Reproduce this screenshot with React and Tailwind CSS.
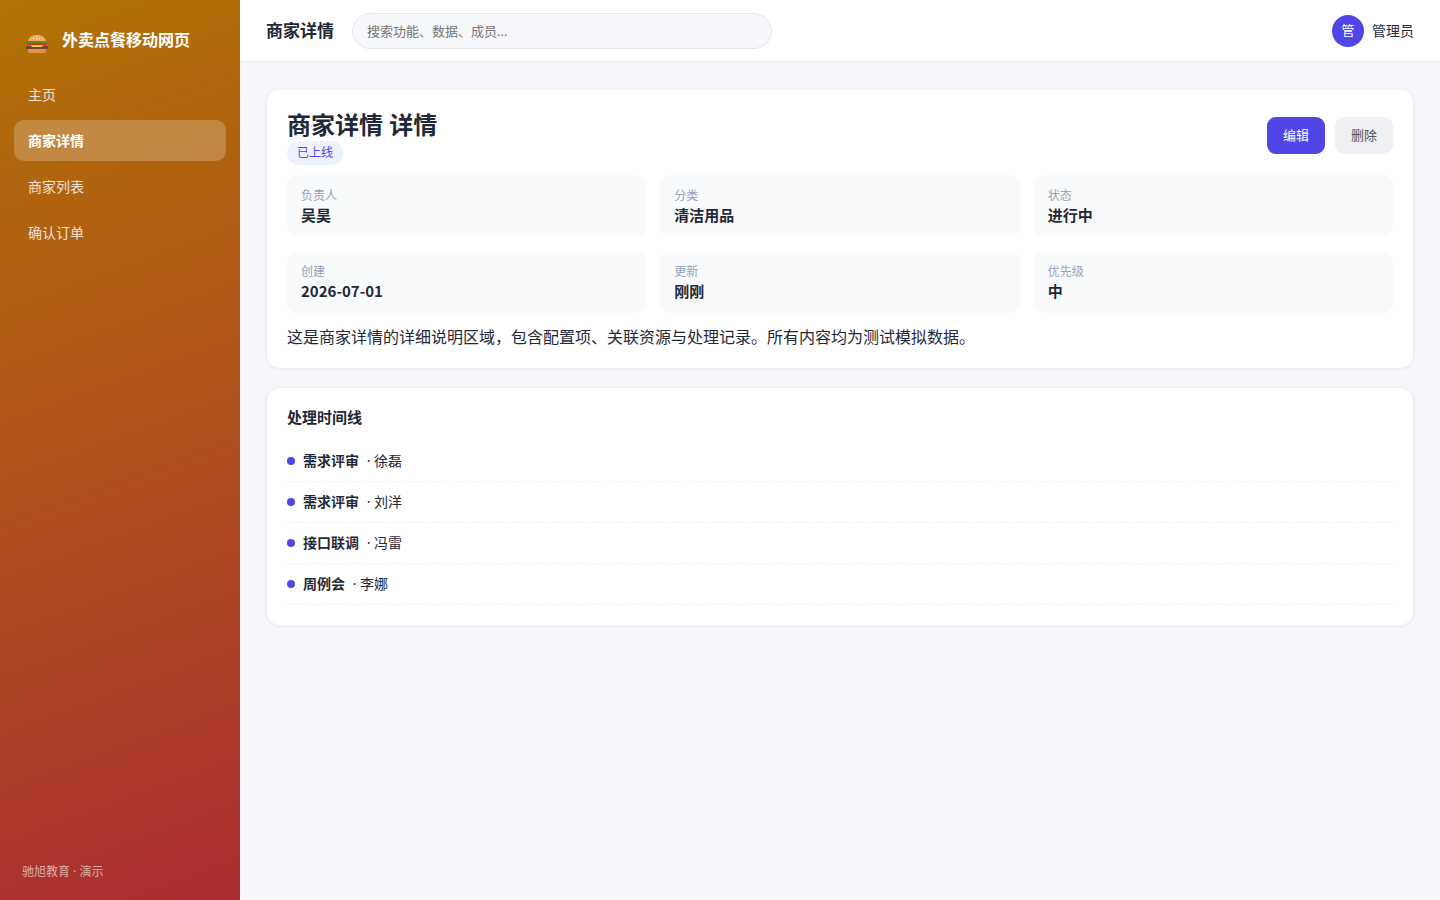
import { useState } from 'react';

const NAV_ITEMS = ['主页', '商家详情', '商家列表', '确认订单'];

const FIELDS = [
  { label: '负责人', value: '吴昊' },
  { label: '分类',   value: '清洁用品' },
  { label: '状态',   value: '进行中' },
  { label: '创建',   value: '2026-07-01' },
  { label: '更新',   value: '刚刚' },
  { label: '优先级', value: '中' },
];

const TIMELINE = [
  { id: 1, title: '需求评审', person: '徐磊' },
  { id: 2, title: '需求评审', person: '刘洋' },
  { id: 3, title: '接口联调', person: '冯雷' },
  { id: 4, title: '周例会',   person: '李娜' },
];

function BurgerIcon() {
  return (
    <svg viewBox="0 0 22 18" className="w-[22px] h-[18px] mt-2 shrink-0" aria-hidden="true">
      {/* buns */}
      <path d="M2 14h18v2a2 2 0 0 1-2 2H4a2 2 0 0 1-2-2z" fill="#e09545" />
      <path d="M2 7C2 2.5 6 0 11 0s9 2.5 9 7z" fill="#f2a960" />
      {/* tomato, lettuce, cheese, patty */}
      <rect x="1" y="8" width="20" height="2" rx="1" fill="#e8251f" />
      <path d="M0 8c0-1 1-2 3-2h16c2 0 3 1 3 2-1 .8-2 .5-3 0H3c-1 .5-2 .8-3 0z" fill="#4a9a18" />
      <rect x="0" y="11" width="22" height="3" rx="1" fill="#6e4537" />
      <path d="M5 10h12l-1 2H6z" fill="#fdd23c" />
      <path d="M7 3h1v1H7zM10 2h1v1h-1zM13 3h1v1h-1zM11 4h1v1h-1z" fill="#fff3d8" />
    </svg>
  );
}

function Sidebar({ active, onSelect }) {
  return (
    <aside className="w-60 shrink-0 flex flex-col bg-[linear-gradient(160deg,#b27306,#ab2d31)] text-white">
      <div className="flex items-center gap-3.5 px-[26px] pt-6 pb-[18px]">
        <BurgerIcon />
        <span className="text-base leading-8 font-bold">外卖点餐移动网页</span>
      </div>
      <nav className="flex flex-col gap-[5px] px-3.5">
        {NAV_ITEMS.map(item => (
          <a
            key={item}
            href="#"
            onClick={e => { e.preventDefault(); onSelect(item); }}
            className={`block rounded-[10px] px-3.5 py-2.5 text-sm leading-[21px] ${
              item === active
                ? 'bg-white/22 font-bold text-white'
                : 'text-white/80 hover:bg-white/10'
            }`}
          >
            {item}
          </a>
        ))}
      </nav>
      <p className="mt-auto px-[22px] pb-[19px] text-xs leading-[18px] text-white/60">驰旭教育 · 演示</p>
    </aside>
  );
}

function Topbar({ title }) {
  return (
    <header className="flex items-center gap-[18px] bg-white border-b border-[#ebedf2] px-[26px] pt-[13px] pb-3">
      <h2 className="text-[17px] leading-6 font-bold">{title}</h2>
      <input
        type="search"
        aria-label="搜索"
        placeholder="搜索功能、数据、成员..."
        className="w-[420px] h-9 rounded-full border border-[#e4e7ef] bg-[#f6f7fb] px-3.5 text-[13px] placeholder:text-[#757575] focus:outline-none focus:border-[#4f46e5]"
      />
      <div className="ml-auto flex items-center gap-2">
        <span className="flex size-8 items-center justify-center rounded-full bg-[#4f46e5] text-[13px] text-white">管</span>
        <span className="text-sm">管理员</span>
      </div>
    </header>
  );
}

export default function App() {
  const [active, setActive] = useState('商家详情');

  return (
    <div className="flex min-h-screen bg-[#f5f7fb] font-['Noto_Sans','Noto_Sans_CJK_SC',sans-serif] text-[#1f2937]">
      <Sidebar active={active} onSelect={setActive} />

      <div className="flex-1 min-w-0">
        <Topbar title={active} />

        <main className="flex flex-col gap-[18px] p-[26px]">
          <section className="rounded-[14px] border border-[#eef0f5] bg-white p-5 shadow-[0_1px_3px_rgba(15,23,42,0.05)]">
            <div className="flex items-start justify-between">
              <div>
                <h1 className="text-2xl leading-8 font-bold">{active} 详情</h1>
                <span className="block w-fit rounded-full bg-[#eef2ff] px-2.5 py-[3px] text-xs leading-[18px] text-[#4f46e5]">
                  已上线
                </span>
              </div>
              <div className="mt-2 flex gap-2.5">
                <button className="rounded-[9px] bg-[#4f46e5] px-4 py-2 text-[13px] leading-[21px] text-white">
                  编辑
                </button>
                <button className="rounded-[9px] bg-[#eef0f4] px-4 py-2 text-[13px] leading-[21px] text-[#475569]">
                  删除
                </button>
              </div>
            </div>

            <dl className="mt-2.5 grid grid-cols-3 gap-3.5">
              {FIELDS.map(f => (
                <div key={f.label} className="rounded-[10px] bg-[#f9fafc] px-3.5 py-3">
                  <dt className="text-xs leading-[18px] text-[#94a3b8]">{f.label}</dt>
                  <dd className="font-['Noto_Sans_CJK_SC',sans-serif] text-[15px] leading-5 font-bold">{f.value}</dd>
                </div>
              ))}
            </dl>

            <p className="mt-3.5 text-base leading-[21px]">
              这是商家详情的详细说明区域，包含配置项、关联资源与处理记录。所有内容均为测试模拟数据。
            </p>
          </section>

          <section className="rounded-[14px] border border-[#eef0f5] bg-white p-5 shadow-[0_1px_3px_rgba(15,23,42,0.05)]">
            <h3 className="mb-[15px] text-[15px] leading-[18px] font-bold">处理时间线</h3>
            <ul>
              {TIMELINE.map(t => (
                <li key={t.id} className="flex items-center gap-2 border-b border-dashed border-[#eef0f4] py-2.5 text-sm leading-5">
                  <span className="size-2 rounded-full bg-[#4f46e5]" />
                  <span><b className="mr-1 font-bold">{t.title}</b> · {t.person}</span>
                </li>
              ))}
            </ul>
          </section>
        </main>
      </div>
    </div>
  );
}
